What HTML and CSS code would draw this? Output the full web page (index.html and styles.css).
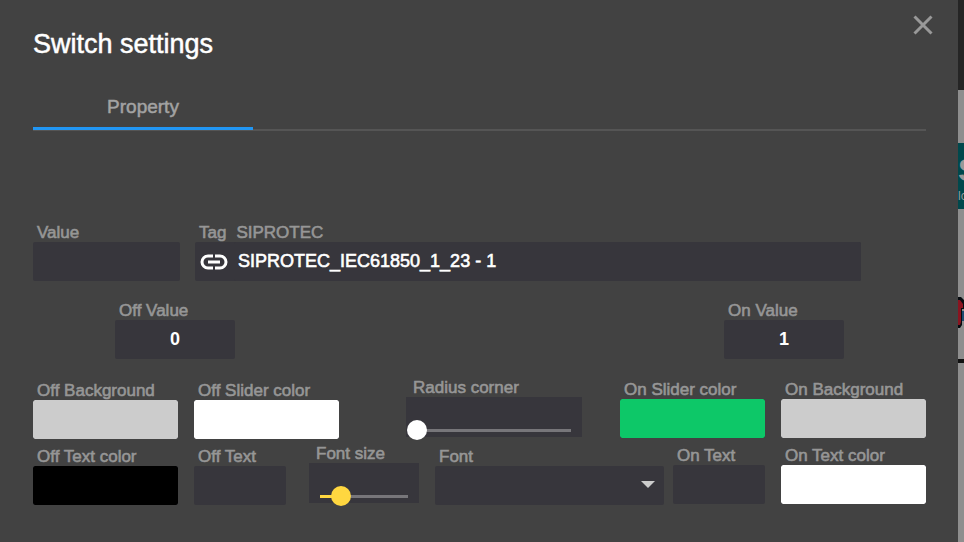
FILE: index.html
```html
<!DOCTYPE html>
<html lang="en">
<head>
<meta charset="utf-8">
<title>Switch settings</title>
<link rel="stylesheet" href="styles.css">
</head>
<body>
<main class="dialog">
  <header class="dialog-header">
    <h1>Switch settings</h1>
    <button class="close" type="button" aria-label="Close">
      <svg viewBox="0 0 20 20" width="20" height="20"><path d="M1.5 1.5 18.500 18.500M18.500 1.500 1.500 18.500"/></svg>
    </button>
  </header>
  <nav class="tabs"><button class="tab" type="button">Property</button></nav>
  <form class="form">
    <div class="row row-tag">
      <div class="field value"><label for="value">Value</label><input id="value" type="text"></div>
      <div class="field tag">
        <div class="tag-labels"><label for="tag">Tag</label><span>SIPROTEC</span></div>
        <div class="tag-box">
          <button class="link" type="button" aria-label="Bind tag">
            <svg viewBox="0 0 28 16" width="28" height="16"><path d="M13 2H8a6 6 0 0 0 0 12h5M15 2h5a6 6 0 0 1 0 12h-5M8 8h12"/></svg>
          </button>
          <input id="tag" type="text" value="SIPROTEC_IEC61850_1_23 - 1">
        </div>
      </div>
    </div>
    <div class="row row-values">
      <div class="field number"><label for="off">Off Value</label><input id="off" type="text" value="0"></div>
      <div class="field number"><label for="on">On Value</label><input id="on" type="text" value="1"></div>
    </div>
    <div class="row row-colors">
      <div class="group">
        <div class="field swatch"><label for="offbg">Off Background</label><input id="offbg" type="color" value="#cccccc"></div>
        <div class="field swatch"><label for="offsl">Off Slider color</label><input id="offsl" type="color" value="#ffffff"></div>
      </div>
      <div class="field slider radius"><label for="radius">Radius corner</label><div class="slider-box"><input id="radius" type="range" value="0"></div></div>
      <div class="group group-on">
        <div class="field swatch"><label for="onsl">On Slider color</label><input id="onsl" type="color" value="#0dc868"></div>
        <div class="field swatch"><label for="onbg">On Background</label><input id="onbg" type="color" value="#cccccc"></div>
      </div>
    </div>
    <div class="row row-text">
      <div class="group">
        <div class="field swatch"><label for="offtc">Off Text color</label><input id="offtc" type="color" value="#000000"></div>
        <div class="field short"><label for="offt">Off Text</label><input id="offt" type="text"></div>
      </div>
      <div class="field slider size"><label for="size">Font size</label><div class="slider-box"><input id="size" type="range" value="24"></div></div>
      <div class="field font"><label for="font">Font</label>
        <div class="select-box">
          <select id="font"><option></option></select>
          <svg class="caret" viewBox="0 0 14 7" width="14" height="7"><path d="M0 0h14L7 7z"/></svg>
        </div>
      </div>
      <div class="group group-on">
        <div class="field short"><label for="ont">On Text</label><input id="ont" type="text"></div>
        <div class="field swatch"><label for="ontc">On Text color</label><input id="ontc" type="color" value="#ffffff"></div>
      </div>
    </div>
  </form>
</main>
<aside class="canvas" aria-hidden="true">
  <div class="canvas-bar"></div>
  <div class="canvas-logo"><b>S</b><span>lc</span></div>
  <svg class="canvas-mark" viewBox="0 0 6 32" width="6" height="32"><path d="M0 0h3l3 3v9H4v16l-2 3H0z" fill="#060b10"/><path d="M0 3h2l3 4v4H3v14l-1 3H0z" fill="#8a1420"/><path d="M4 14h2v10H4z" fill="#1c4a70"/></svg>
  <div class="canvas-line"></div>
</aside>
</body>
</html>
```
FILE: styles.css
```css
* { box-sizing: border-box; }

body {
  margin: 0;
  display: flex;
  min-height: 100vh;
  background: #8e8e8e;
  font-family: "Liberation Sans", Arial, sans-serif;
}

.dialog {
  flex: 1;
  min-width: 0;
  padding: 0 32px 32px 33px;
  background: #424242;
}

.dialog-header {
  display: flex;
  justify-content: space-between;
  align-items: flex-start;
  margin-right: -8px;
  padding-top: 14px;
}

h1 {
  margin: 0;
  padding-top: 14px;
  font: 400 27px/32px "Liberation Sans", sans-serif;
  color: #fff;
  -webkit-text-stroke: 0.5px #fff;
}

button {
  padding: 0;
  border: 0;
  background: none;
}

.close { width: 22px; height: 22px; }
.close svg { display: block; margin: auto; }
.close path { stroke: #999; stroke-width: 3; }

.tabs {
  display: flex;
  height: 71px;
  align-items: flex-end;
  border-bottom: 2px solid #555;
}

.tab {
  width: 220px;
  height: 44px;
  margin-bottom: -1px;
  border-bottom: 3px solid #2196f3;
  font: 400 19px/40px "Liberation Sans", sans-serif;
  color: #a3a3a3;
  -webkit-text-stroke: 0.5px #a3a3a3;
}

.form { padding-top: 91px; }
.row { display: flex; align-items: flex-end; }
.row-tag { gap: 15px; }
.row-values { margin-top: 19px; padding: 0 82px; justify-content: space-between; }
.row-colors { margin-top: 18px; }
.row-text { margin-top: 4px; }

.group { display: flex; gap: 16px; }
.group-on { padding-bottom: 1px; }
.row-colors .group-on { margin-left: auto; }
.row-text .group-on { margin-left: 9px; }

.field {
  display: flex;
  flex-direction: column;
  font-size: 17px;
  line-height: 18px;
  color: #969696;
}

.field > label, .tag-labels {
  padding: 2px 0 0 4px;
  white-space: nowrap;
  -webkit-text-stroke: 0.6px #969696;
}

.field input, .field select {
  display: block;
  width: 100%;
  height: 39px;
  margin: 0;
  padding: 0 4px;
  border: 0;
  border-radius: 2px;
  outline: 0;
  background: #37363c;
  font: 400 18px/38px "Liberation Sans", sans-serif;
  color: #fff;
  -webkit-text-stroke: 0.6px #fff;
}

.value { width: 147px; }
.tag { flex: 1; margin-right: 65px; }
.tag-labels { display: flex; gap: 10px; }
.tag-box { display: flex; align-items: center; border-radius: 2px; background: #37363c; }
.link { width: 39px; height: 39px; flex: none; padding-left: 5px; text-align: left; }
.link svg { display: block; }
.link path { fill: none; stroke: #fff; stroke-width: 3; }

.number { width: 120px; }
.number input { text-align: center; font-weight: 700; -webkit-text-stroke: 0; }
.short { width: 92px; }
.swatch { width: 145px; }
.field input[type="color"] { padding: 0; appearance: none; }
input[type="color"]::-webkit-color-swatch-wrapper { padding: 0; }
input[type="color"]::-webkit-color-swatch { border: 0; border-radius: 2px; }

.slider { margin-bottom: 2px; }
.slider > label { padding-left: 7px; }
.slider-box { display: flex; align-items: flex-end; height: 40px; padding: 0 1px; background: #37363c; }
.radius { width: 176px; margin-left: 67px; }
.size { width: 110px; margin-left: 23px; }

.field input[type="range"] {
  height: 20px;
  margin-bottom: -3px;
  padding: 0;
  appearance: none;
  background: linear-gradient(#77767a, #77767a) 10px 50% / calc(100% - 20px) 3px no-repeat;
}

.field #size {
  background:
    linear-gradient(#ffd740, #ffd740) 10px 50% / 20px 3px no-repeat,
    linear-gradient(#77767a, #77767a) 10px 50% / calc(100% - 20px) 3px no-repeat;
}

input[type="range"]::-webkit-slider-thumb {
  appearance: none;
  width: 20px;
  height: 20px;
  border-radius: 50%;
  background: #fff;
}

#size::-webkit-slider-thumb { background: #ffd740; }

.font { flex: 1; min-width: 80px; margin-left: 16px; }
.select-box { position: relative; }
.field select { appearance: none; }
.caret { position: absolute; right: 9px; top: 15px; fill: #ccc; pointer-events: none; }

.canvas { width: 6px; overflow: hidden; }
.canvas-bar { height: 90px; background: #252525; }
.canvas-logo {
  height: 66px;
  margin-top: 53px;
  padding-top: 10px;
  overflow: hidden;
  background: #00484c;
  color: #999;
  font-size: 12px;
  line-height: 18px;
}
.canvas-logo b { display: block; font-size: 32px; line-height: 34px; }
.canvas-mark { display: block; margin-top: 88px; }
.canvas-line { height: 4px; margin-top: 30px; background: #111; }
```
